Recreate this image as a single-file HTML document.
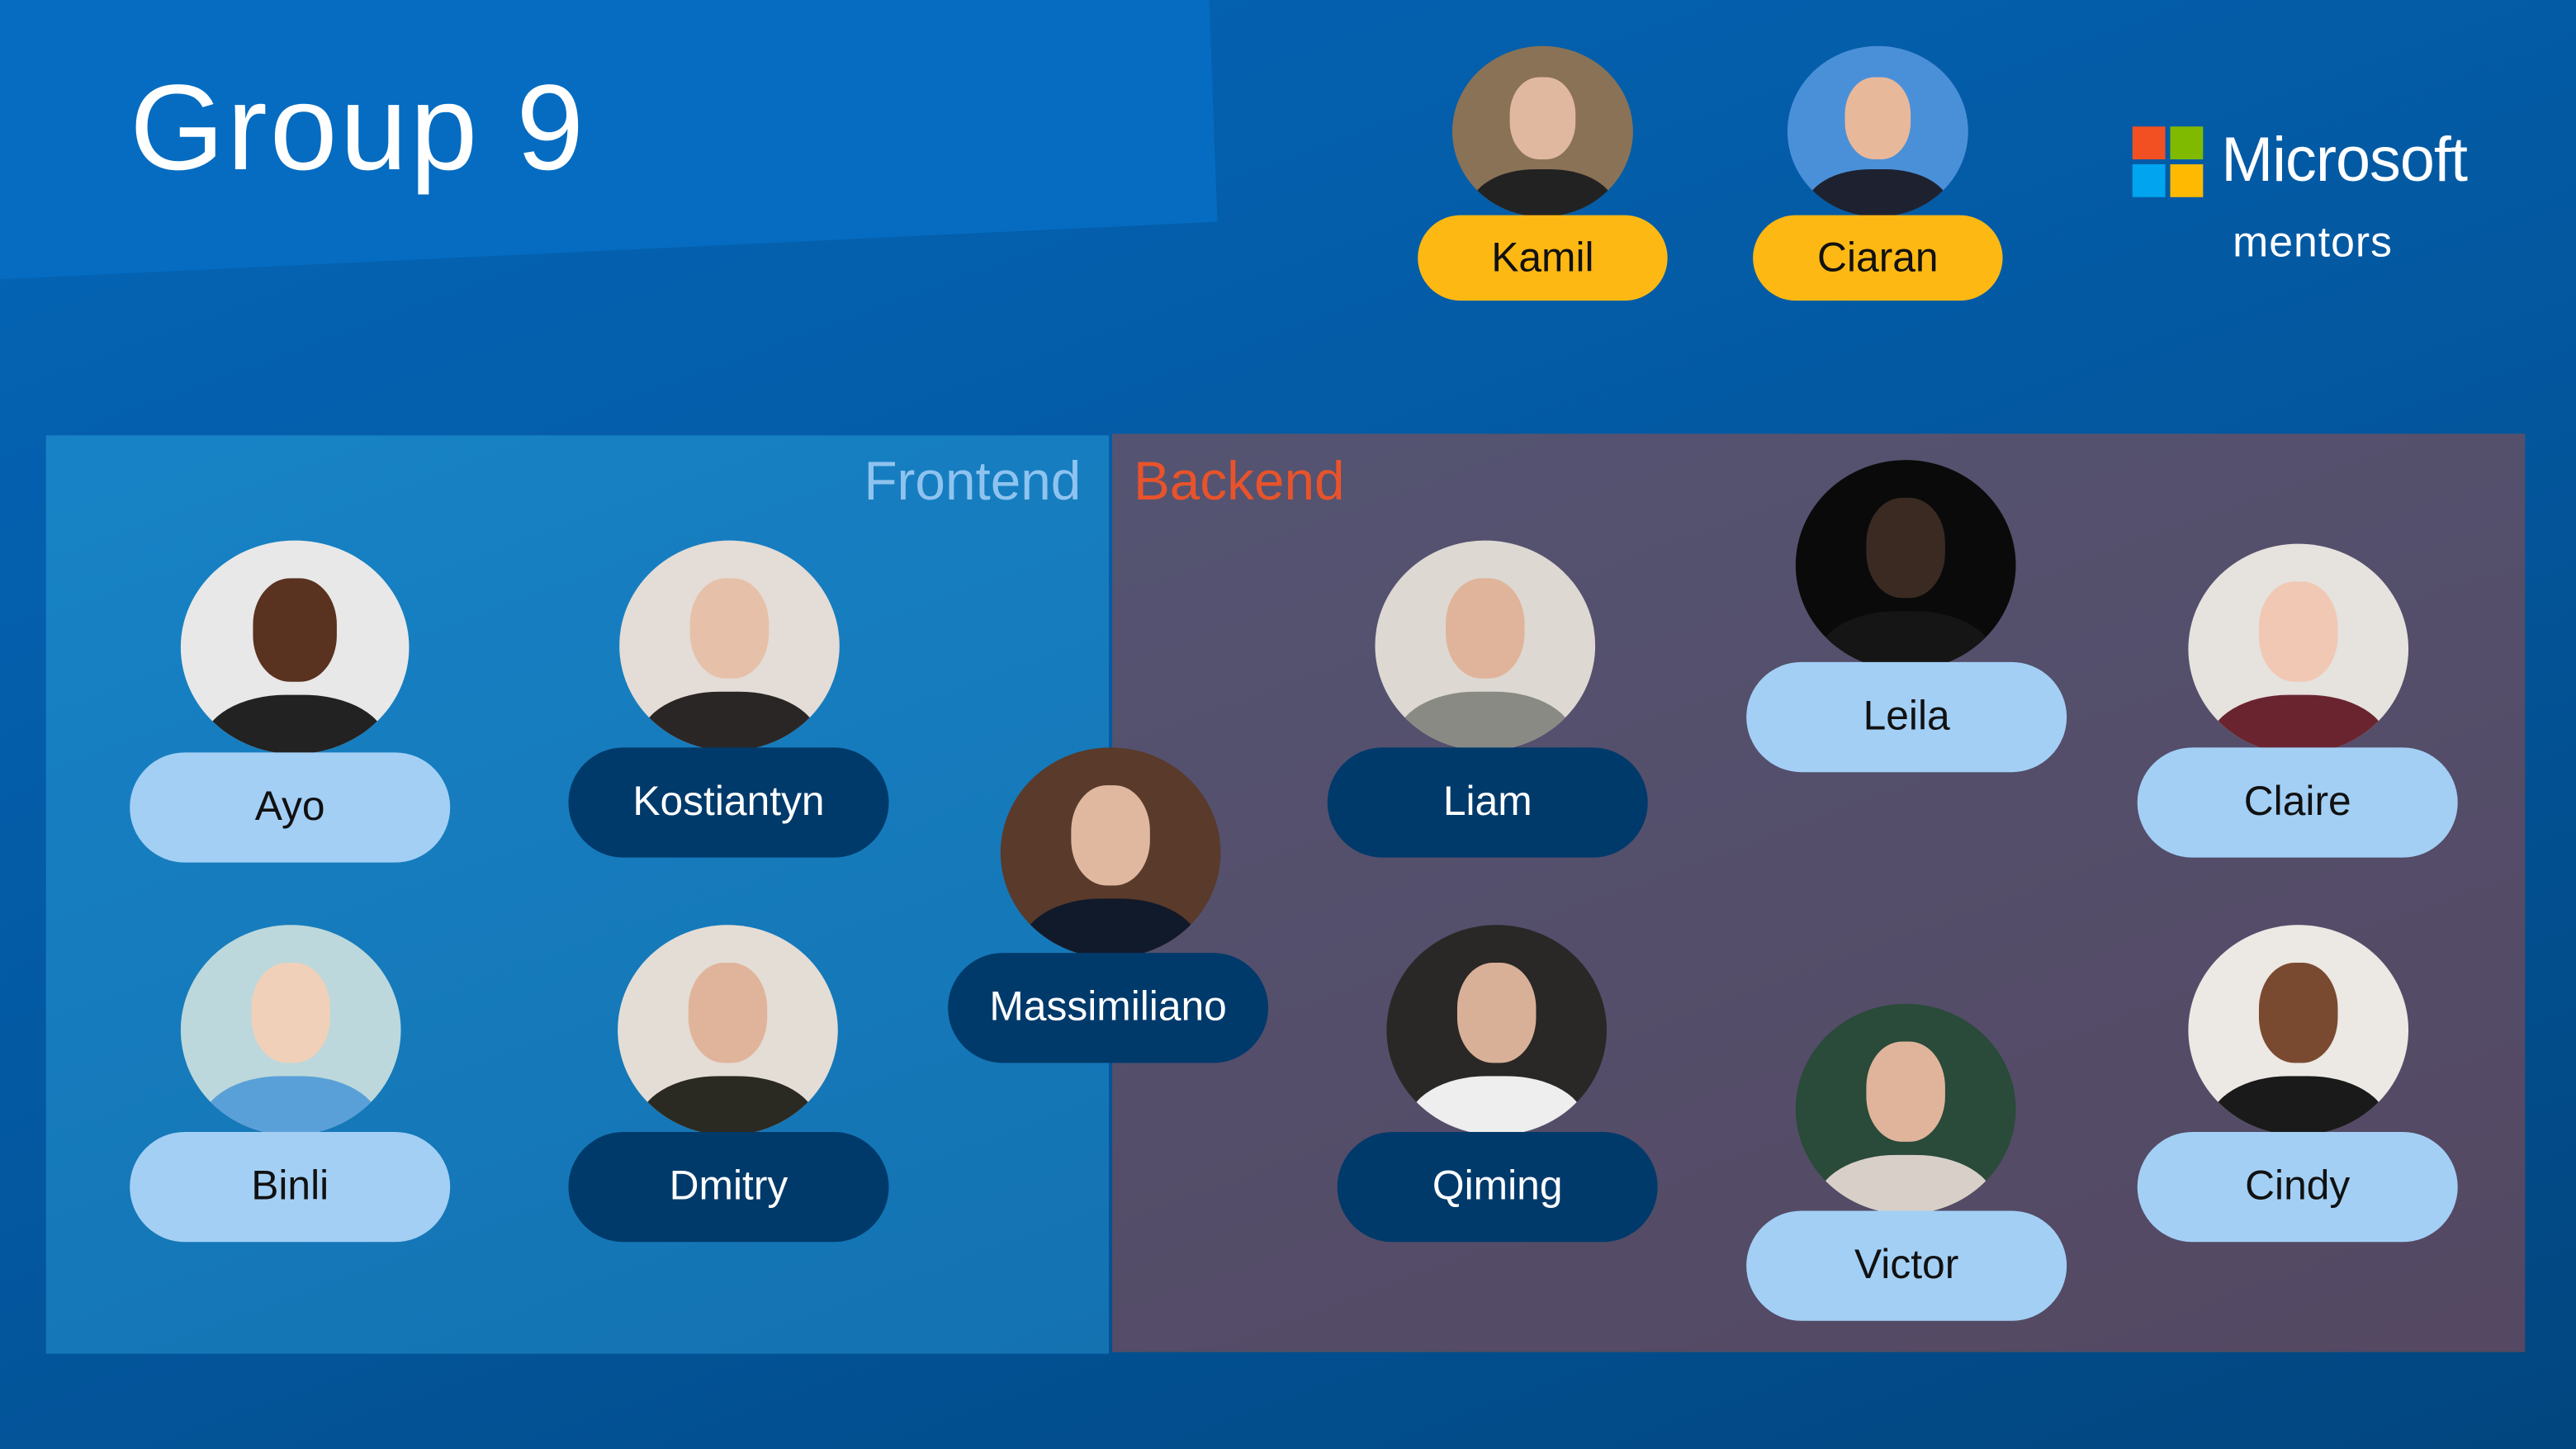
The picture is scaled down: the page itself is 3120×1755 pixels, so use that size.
<!DOCTYPE html>
<html><head><meta charset="utf-8"><style>
html,body{margin:0;padding:0;overflow:hidden;width:3120px;height:1755px;}
#s{position:absolute;left:0;top:0;width:1568px;height:882px;transform:scale(1.9898);transform-origin:0 0;background:linear-gradient(160deg,#0566b8 0%,#0358a0 50%,#02467f 100%);font-family:"Liberation Sans",sans-serif;overflow:hidden}
.a{position:absolute}
.pill{position:absolute;width:195px;height:67px;border-radius:34px;display:flex;align-items:center;justify-content:center;font-size:25px;}
.l{background:#a3cff5;color:#111}
.d{background:#003a6b;color:#fff}
.y{background:#fdb813;color:#111;width:152px;height:52px;border-radius:26px;font-size:25px}
.c{position:absolute;border-radius:50%;overflow:hidden}
.c .f{position:absolute;left:32%;top:18%;width:36%;height:48%;border-radius:45%}
.c .b{position:absolute;left:10%;top:72%;width:80%;height:50%;border-radius:45% 45% 0 0}
</style></head><body><div id="s">
<svg class="a" style="left:0;top:0" width="760" height="180"><polygon points="0,0 736,0 741,135 0,170" fill="#056cc1"/></svg>
<div class="a" style="left:79px;top:35px;font-size:74px;color:#fff;letter-spacing:1.5px">Group 9</div>

<div class="a" style="left:28px;top:265px;width:647px;height:559px;background:linear-gradient(160deg,#1783c6,#1472b1)"></div>
<div class="a" style="left:677px;top:264px;width:860px;height:559px;background:linear-gradient(160deg,#545472,#544862)"></div>
<div class="a" style="left:500px;top:274px;width:158px;text-align:right;font-size:33px;color:#8fc3ef">Frontend</div>
<div class="a" style="left:690px;top:274px;font-size:33px;color:#e8532b">Backend</div>

<div class="a" style="left:1298px;top:77px;width:20px;height:20px;background:#f25022"></div>
<div class="a" style="left:1321px;top:77px;width:20px;height:20px;background:#7fba00"></div>
<div class="a" style="left:1298px;top:100px;width:20px;height:20px;background:#00a4ef"></div>
<div class="a" style="left:1321px;top:100px;width:20px;height:20px;background:#ffb900"></div>
<div class="a" style="left:1352px;top:77px;font-size:38px;color:#fff;letter-spacing:-0.5px">Microsoft</div>
<div class="a" style="left:1359px;top:132px;font-size:26px;color:#fff;letter-spacing:0.5px">mentors</div>

<div class="c" style="left:884px;top:28px;width:110px;height:104px;background:#8a7256"><div class="f" style="background:#e0b8a0"></div><div class="b" style="background:#222"></div></div>
<div class="c" style="left:1088px;top:28px;width:110px;height:104px;background:#4a90d8"><div class="f" style="background:#e8b89a"></div><div class="b" style="background:#1e2230"></div></div>
<div class="pill y" style="left:863px;top:131px">Kamil</div>
<div class="pill y" style="left:1067px;top:131px">Ciaran</div>

<div class="c" style="left:110px;top:329px;width:139px;height:130px;background:#e8e8e8"><div class="f" style="background:#5a3220"></div><div class="b" style="background:#222"></div></div>
<div class="c" style="left:377px;top:329px;width:134px;height:128px;background:#e4dcd6"><div class="f" style="background:#e6c0a8"></div><div class="b" style="background:#2a2626"></div></div>
<div class="c" style="left:609px;top:455px;width:134px;height:128px;background:#5a3a2a"><div class="f" style="background:#e0b8a0"></div><div class="b" style="background:#111a2a"></div></div>
<div class="c" style="left:110px;top:563px;width:134px;height:128px;background:#bcd8dc"><div class="f" style="background:#f0d0b8"></div><div class="b" style="background:#5aa0d8"></div></div>
<div class="c" style="left:376px;top:563px;width:134px;height:128px;background:#e4ddd6"><div class="f" style="background:#e0b49a"></div><div class="b" style="background:#2a2a22"></div></div>
<div class="c" style="left:837px;top:329px;width:134px;height:128px;background:#ddd8d2"><div class="f" style="background:#e0b49a"></div><div class="b" style="background:#8a8a84"></div></div>
<div class="c" style="left:1093px;top:280px;width:134px;height:128px;background:#0a0a0a"><div class="f" style="background:#3a2a22"></div><div class="b" style="background:#151515"></div></div>
<div class="c" style="left:1332px;top:331px;width:134px;height:128px;background:#e6e2de"><div class="f" style="background:#f0c8b4"></div><div class="b" style="background:#6a2430"></div></div>
<div class="c" style="left:844px;top:563px;width:134px;height:128px;background:#2a2826"><div class="f" style="background:#d8b098"></div><div class="b" style="background:#eee"></div></div>
<div class="c" style="left:1093px;top:611px;width:134px;height:128px;background:#2a4a3a"><div class="f" style="background:#e0b49a"></div><div class="b" style="background:#d8d0c8"></div></div>
<div class="c" style="left:1332px;top:563px;width:134px;height:128px;background:#ece8e4"><div class="f" style="background:#7a4a30"></div><div class="b" style="background:#1a1a1a"></div></div>

<div class="pill l" style="left:79px;top:458px">Ayo</div>
<div class="pill d" style="left:346px;top:455px">Kostiantyn</div>
<div class="pill d" style="left:577px;top:580px">Massimiliano</div>
<div class="pill l" style="left:79px;top:689px">Binli</div>
<div class="pill d" style="left:346px;top:689px">Dmitry</div>
<div class="pill d" style="left:808px;top:455px">Liam</div>
<div class="pill l" style="left:1063px;top:403px">Leila</div>
<div class="pill l" style="left:1301px;top:455px">Claire</div>
<div class="pill d" style="left:814px;top:689px">Qiming</div>
<div class="pill l" style="left:1063px;top:737px">Victor</div>
<div class="pill l" style="left:1301px;top:689px">Cindy</div>
</div></body></html>
